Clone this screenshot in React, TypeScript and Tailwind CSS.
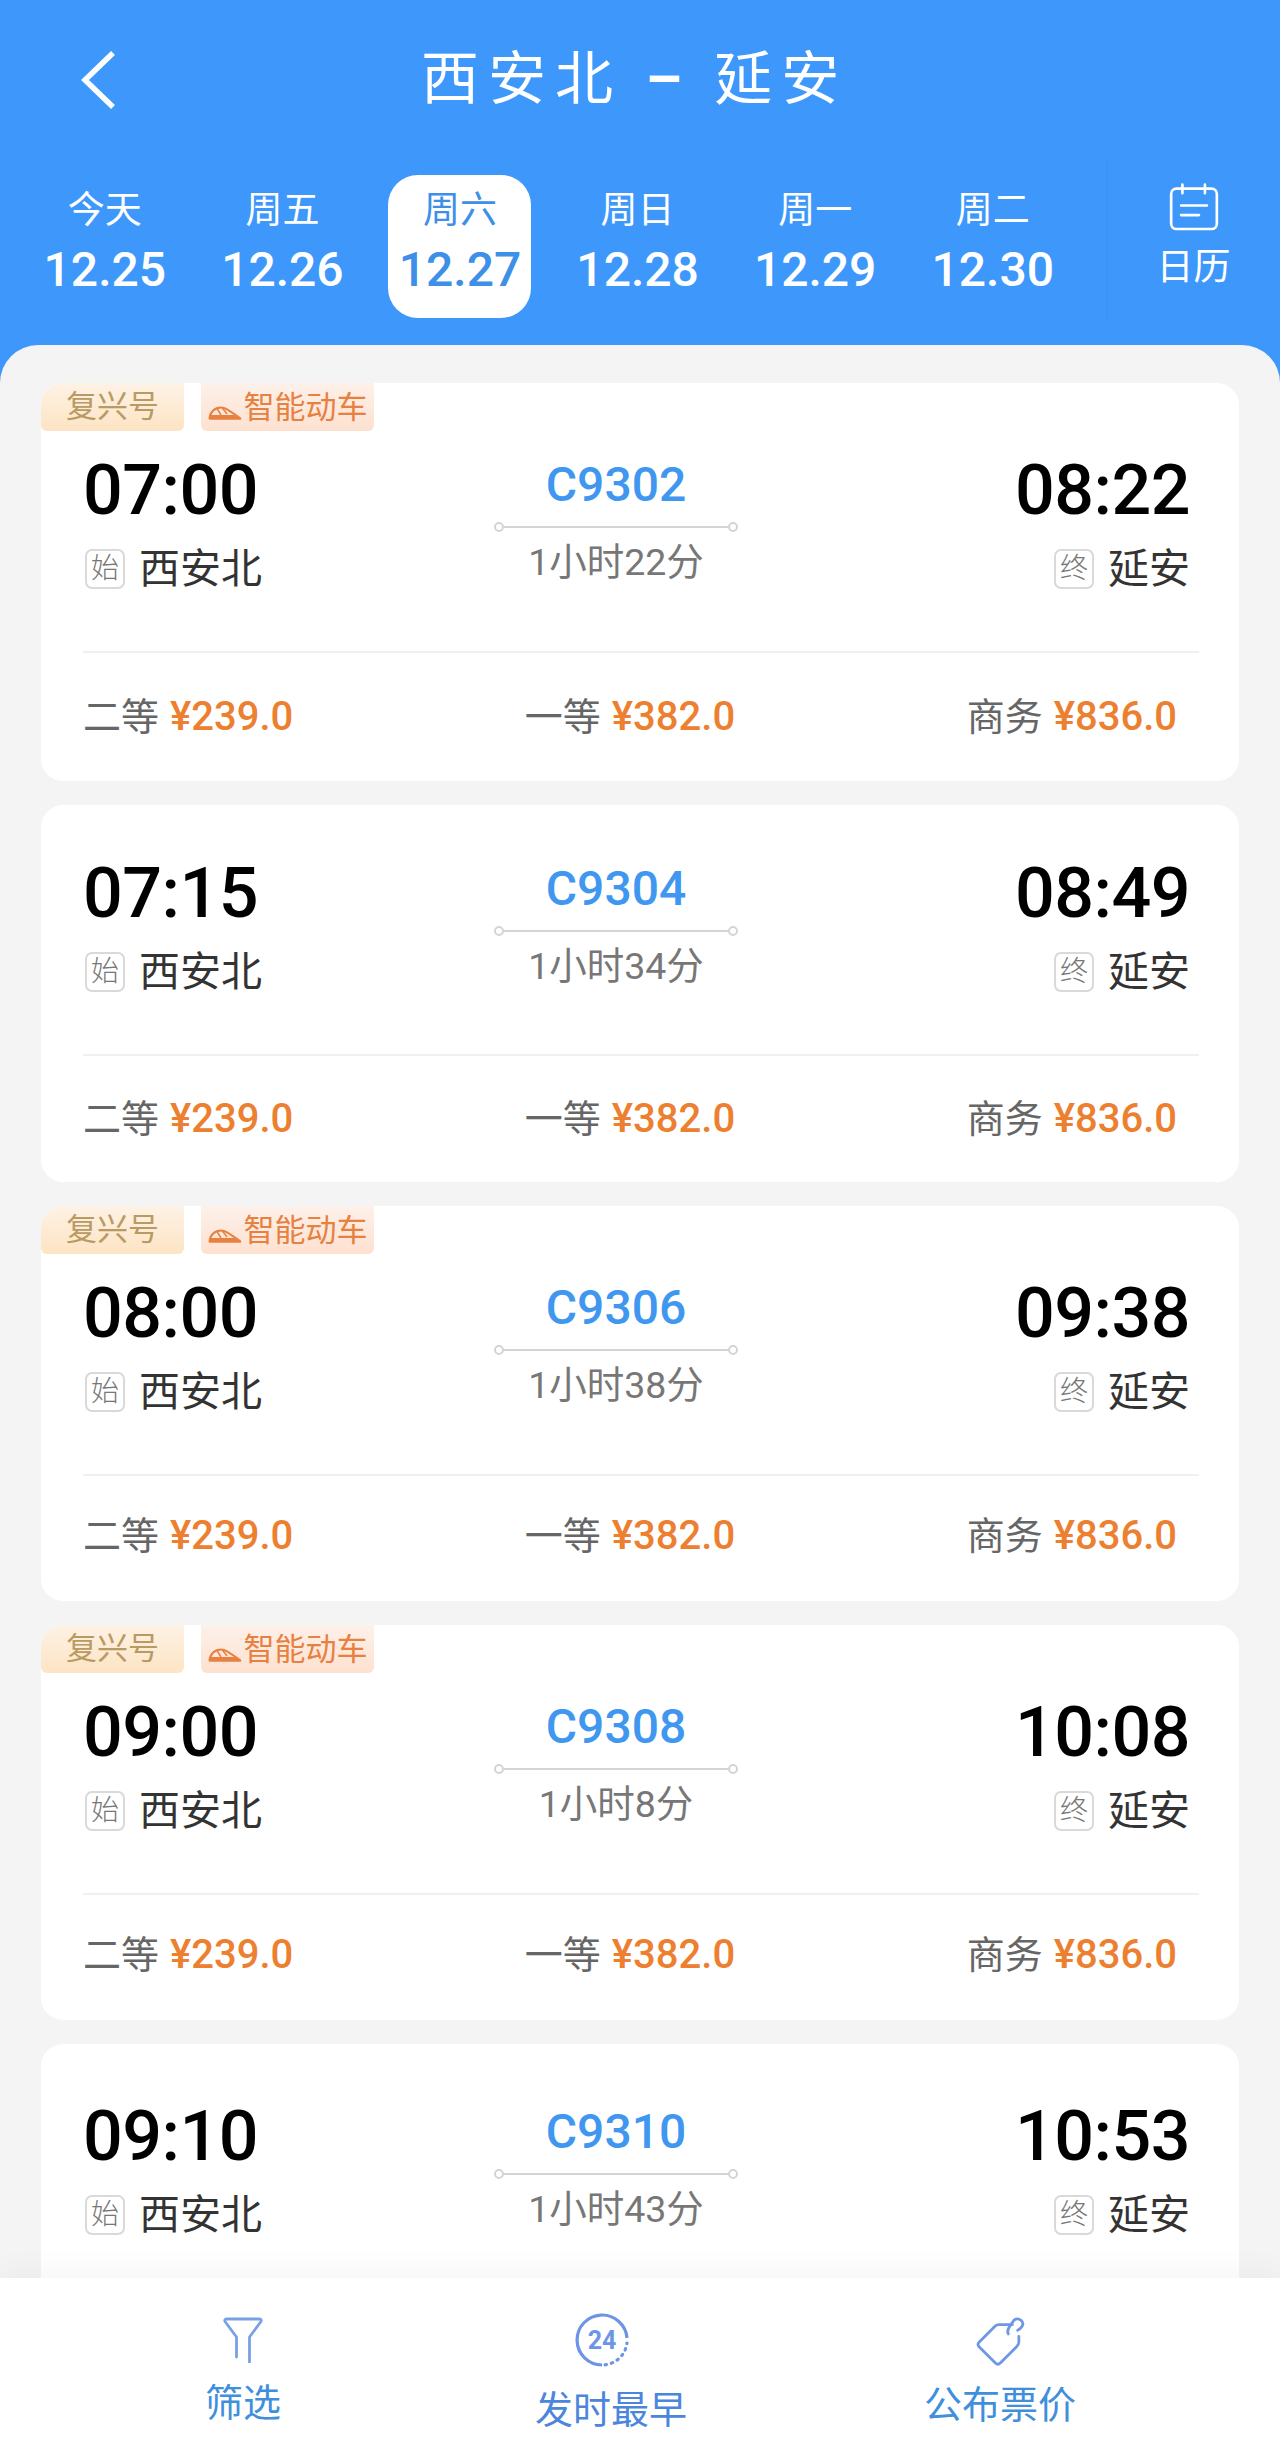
import React from 'react';

interface Train {
  dep: string;
  arr: string;
  no: string;
  dur: string;
  tags: boolean;
  cardTop: string;
  priceRow: string;
}

// the last card runs under the bottom bar, so it has no price row
const trains: Train[] = [
  { dep: '07:00', arr: '08:22', no: 'C9302', dur: '1小时22分', tags: true, cardTop: '', priceRow: 'h-[128px]' },
  { dep: '07:15', arr: '08:49', no: 'C9304', dur: '1小时34分', tags: false, cardTop: 'pt-[53px]', priceRow: 'h-[126px]' },
  { dep: '08:00', arr: '09:38', no: 'C9306', dur: '1小时38分', tags: true, cardTop: '', priceRow: 'h-[125px] pb-[5px]' },
  { dep: '09:00', arr: '10:08', no: 'C9308', dur: '1小时8分', tags: true, cardTop: '', priceRow: 'h-[125px] pb-[5px]' },
  { dep: '09:10', arr: '10:53', no: 'C9310', dur: '1小时43分', tags: false, cardTop: 'pt-[57px]', priceRow: '' },
];

const days = [
  { label: '今天', date: '12.25' },
  { label: '周五', date: '12.26' },
  { label: '周六', date: '12.27', active: true },
  { label: '周日', date: '12.28' },
  { label: '周一', date: '12.29' },
  { label: '周二', date: '12.30' },
];

const prices = [
  { seat: '二等', price: '¥239.0' },
  { seat: '一等', price: '¥382.0' },
  { seat: '商务', price: '¥836.0' },
];

function TrainIcon() {
  return (
    <svg width="34" height="14" viewBox="0 0 34 14" fill="none" className="shrink-0">
      <path d="M1.5 12.5C2 6 7 1.5 13 1.5c4 0 7 2 19 10.5 .6 .5 .3 .8 -.5 .8H2z" stroke="#e8803f" strokeWidth="2" />
      <path d="M2 9h24l6 3.5H2z" fill="#e8803f" />
      <path d="M9 2.5L13 9M14 1.5L19 8" stroke="#e8803f" strokeWidth="1.5" />
    </svg>
  );
}

function CalendarIcon() {
  return (
    <svg width="50" height="48" viewBox="60 35 150 145" fill="none" stroke="white" strokeWidth="8" strokeLinecap="round">
      <rect x="66" y="52" width="138" height="122" rx="16" />
      <path d="M100 40V66M168 40V66" />
      <path d="M96 103H174M96 132H150" />
    </svg>
  );
}

function FilterIcon() {
  return (
    <svg width="40" height="46" viewBox="0 0 40 46" fill="none" stroke="#7aa0e4" strokeWidth="2.8" strokeLinecap="round" strokeLinejoin="round">
      <path d="M13.5 40V20L2 4.5C1.4 3 2.2 2 4 2H36C38 2 38.6 3 38 4.5L26.5 20V45" />
    </svg>
  );
}

function ClockIcon() {
  return (
    <svg width="54" height="54" viewBox="0 0 54 54" fill="none" stroke="#6c95e6" strokeWidth="3.2" className="mr-[18px]">
      <path d="M52 25A25 25 0 1 0 27 52" />
      <path d="M30 51.8A25 25 0 0 0 52 30" strokeDasharray="1.5 5" strokeLinecap="round" />
      <text x="27" y="36" textAnchor="middle" fill="#6c95e6" stroke="none" fontSize="25" fontWeight="700">24</text>
    </svg>
  );
}

function PriceTagIcon() {
  return (
    <svg width="50" height="51" viewBox="35 40 160 165" fill="none" stroke="#6f98e4" strokeWidth="9" strokeLinecap="round" strokeLinejoin="round">
      <path d="M155 68H112Q104 68 98 74L48 124Q40 132 48 140L100 192Q108 200 116 192L168 140Q176 132 176 124V106" />
      <path d="M142 98C134 85 150 68 162 52C176 44 196 58 186 74Q181 82 172 86" />
    </svg>
  );
}

function TrainCard({ train }: { train: Train }) {
  return (
    <div className={`shrink-0 rounded-[22px] bg-white ${train.cardTop}`}>
      {train.tags && (
        <div className="mb-[24px] flex h-[48px] gap-[17px] text-[31px] leading-[47px]">
          <div className="flex w-[143px] justify-center rounded-tl-[22px] rounded-b-[6px] bg-gradient-to-b from-[#fdf2e6] to-[#fde4c3] text-[#b99a62]">
            复兴号
          </div>
          <div className="flex w-[173px] items-center justify-center gap-[2px] rounded-b-[6px] bg-gradient-to-b from-[#fdf1ea] to-[#fde1d0] text-[#e8803f]">
            <span className="mt-[12px]">
              <TrainIcon />
            </span>
            <span>智能动车</span>
          </div>
        </div>
      )}
      <div className="mr-[40px] ml-[42px]">
        <div className="grid h-[196px] grid-cols-[411px_244px_1fr]">
          <div>
            <div className="text-[70px] leading-[70px] font-medium tracking-[-0.5px] text-black">{train.dep}</div>
            <div className="mt-[24px] flex items-center gap-[14px] pl-[2px]">
              <span className="flex h-[40px] w-[40px] items-center justify-center rounded-[7px] border-2 border-[#d9d9d9] text-[28px] leading-none font-light text-[#777]">
                始
              </span>
              <span className="text-[41px] leading-[40px] text-[#333]">西安北</span>
            </div>
          </div>
          <div className={`flex flex-col items-center ${train.tags ? 'pt-[5px]' : 'pt-[6px]'}`}>
            <div className="text-[48px] leading-[50px] font-medium text-[#3f97ef]">{train.no}</div>
            <div className="mt-[12px] flex h-[10px] w-full items-center">
              <span className="h-[10px] w-[10px] shrink-0 rounded-full border-2 border-[#d4d4d4]" />
              <span className="h-[2px] flex-1 bg-[#d4d4d4]" />
              <span className="h-[10px] w-[10px] shrink-0 rounded-full border-2 border-[#d4d4d4]" />
            </div>
            <div className="mt-[10px] text-[37.5px] leading-[40px] text-[#777]">{train.dur}</div>
          </div>
          <div className="flex flex-col items-end pr-[9px]">
            <div className="text-[70px] leading-[70px] font-medium tracking-[-0.5px] text-black">{train.arr}</div>
            <div className="mt-[24px] flex items-center gap-[14px]">
              <span className="flex h-[40px] w-[40px] items-center justify-center rounded-[7px] border-2 border-[#d9d9d9] text-[28px] leading-none font-light text-[#777]">
                终
              </span>
              <span className="text-[41px] leading-[40px] text-[#333]">延安</span>
            </div>
          </div>
        </div>
        {train.priceRow && (
          <>
            <div className="h-[2px] bg-[#f0f0f0]" />
            <div className={`flex items-center justify-between pr-[22px] ${train.priceRow}`}>
              {prices.map((p) => (
                <div key={p.seat} className="flex items-center gap-[11px]">
                  <span className="text-[38px] leading-[40px] text-[#666]">{p.seat}</span>
                  <span className="text-[40px] leading-[40px] font-medium text-[#ec8030]">{p.price}</span>
                </div>
              ))}
            </div>
          </>
        )}
      </div>
    </div>
  );
}

export default function App() {
  return (
    <div className="flex h-[2457px] w-[1280px] flex-col overflow-hidden bg-[#3e98fb] font-['Roboto','Noto_Sans_CJK_SC',sans-serif]">
      <div className="h-[345px] shrink-0">
        <div className="flex h-[175px] items-start pt-[50px]">
          <svg width="36" height="60" viewBox="0 0 36 60" fill="none" stroke="white" strokeWidth="5.5" className="ml-[80px] shrink-0">
            <path d="M33 3L5 30L33 57" />
          </svg>
          <div className="ml-[305px] text-[58px] leading-[58px] tracking-[9px] text-white">
            西安北 <span className="font-bold">–</span> 延安
          </div>
        </div>
        <div className="flex pl-[16px]">
          {days.map((d) => (
            <div key={d.date} className="flex w-[177.6px] justify-center">
              <div
                className={`flex h-[143px] w-[143px] flex-col items-center rounded-[30px] pt-[16px] ${
                  d.active ? 'bg-white text-[#3e8fe8]' : 'text-white'
                }`}
              >
                <span className="text-[37px] leading-[40px]">{d.label}</span>
                <span className="mt-[14px] text-[48px] leading-[50px] font-medium">{d.date}</span>
              </div>
            </div>
          ))}
          <div className="ml-[25px] flex h-[160px] w-[173px] -translate-y-[15px] flex-col items-center border-l border-[#3a92f4] pt-[23px]">
            <CalendarIcon />
            <span className="mt-[20px] text-[37px] leading-[34px] text-white">日历</span>
          </div>
        </div>
      </div>
      <div className="flex min-h-0 flex-1 flex-col gap-[24px] overflow-hidden rounded-t-[38px] bg-[#f4f4f4] px-[41px] pt-[38px]">
        {trains.map((t) => (
          <TrainCard key={t.no} train={t} />
        ))}
      </div>
      <div className="relative z-10 grid h-[179px] shrink-0 grid-cols-[486px_250px_528px] bg-white shadow-[0_-12px_24px_rgba(0,0,0,0.03)]">
        <div className="flex flex-col items-center pt-[39px]">
          <FilterIcon />
          <span className="mt-[20px] text-[38px] leading-[40px] text-[#3f8fdc]">筛选</span>
        </div>
        <div className="flex flex-col items-center pt-[35px]">
          <ClockIcon />
          <span className="mt-[23px] text-[38px] leading-[40px] text-[#4c86dc]">发时最早</span>
        </div>
        <div className="flex flex-col items-center pt-[38px]">
          <PriceTagIcon />
          <span className="mt-[18px] text-[38px] leading-[40px] text-[#3f8fdc]">公布票价</span>
        </div>
      </div>
    </div>
  );
}
